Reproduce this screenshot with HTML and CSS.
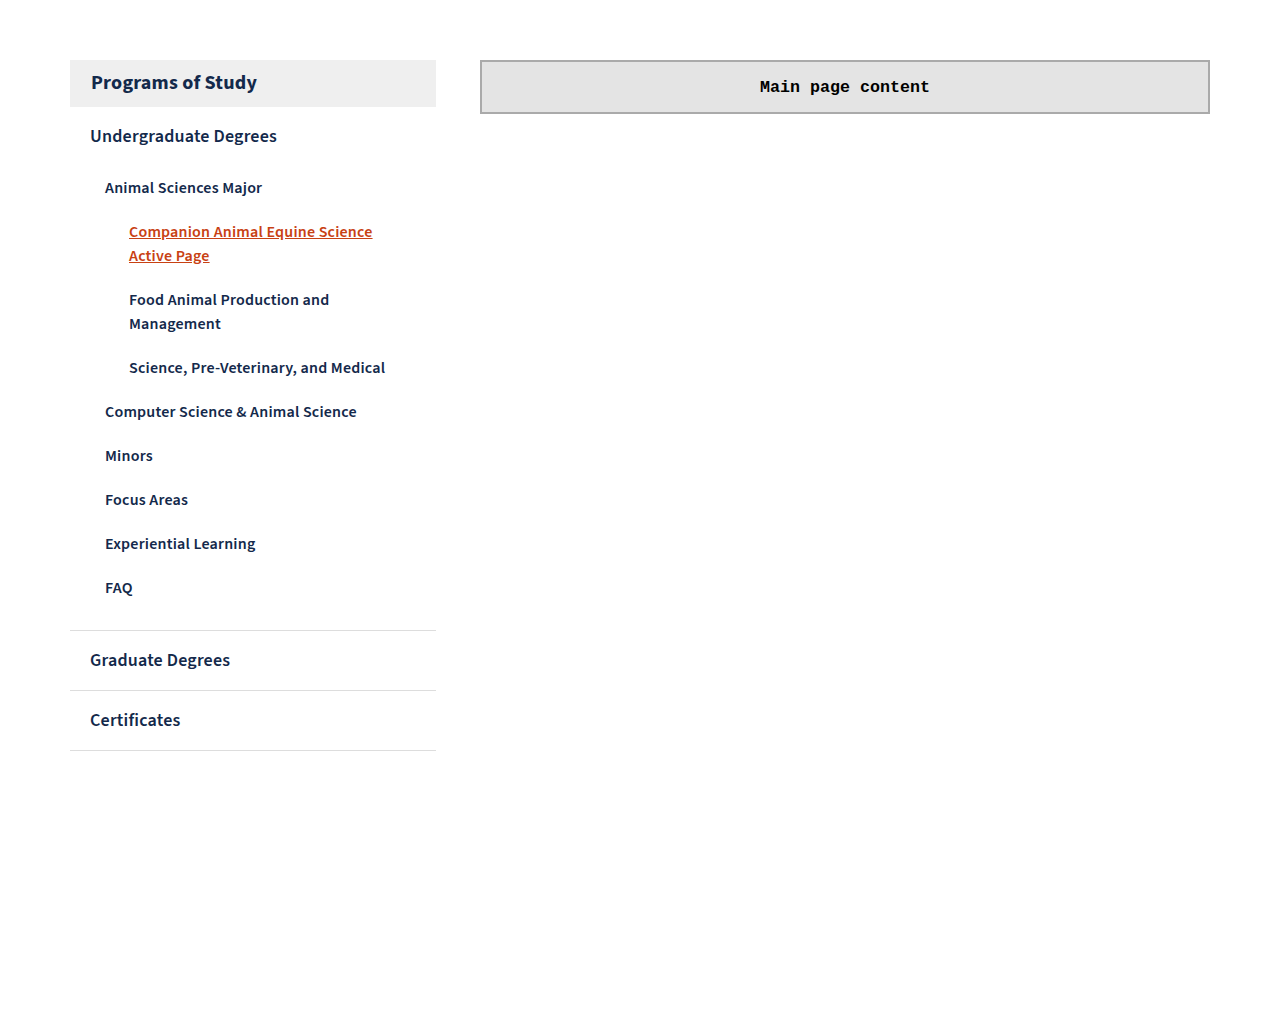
FILE: index.html
```html
<!DOCTYPE html>
<html lang="en">
<head>
<meta charset="utf-8">
<title>Programs of Study</title>
<link rel="stylesheet" href="styles.css">
</head>
<body>
<div class="page">
  <nav class="sidenav">
    <h2 class="sidenav-title">Programs of Study</h2>
    <ul class="level1">
      <li class="level1-item">
        <a class="level1-link first" href="#">Undergraduate Degrees</a>
        <ul class="level2">
          <li>
            <a class="level2-link" href="#">Animal Sciences Major</a>
            <ul class="level3">
              <li><a class="level3-link active" href="#">Companion Animal Equine Science <span>Active Page</span></a></li>
              <li><a class="level3-link" href="#">Food Animal Production and Management</a></li>
              <li><a class="level3-link" href="#">Science, Pre-Veterinary, and Medical</a></li>
            </ul>
          </li>
          <li><a class="level2-link" href="#">Computer Science &amp; Animal Science</a></li>
          <li><a class="level2-link" href="#">Minors</a></li>
          <li><a class="level2-link" href="#">Focus Areas</a></li>
          <li><a class="level2-link" href="#">Experiential Learning</a></li>
          <li><a class="level2-link" href="#">FAQ</a></li>
        </ul>
      </li>
      <li class="level1-item"><a class="level1-link" href="#">Graduate Degrees</a></li>
      <li class="level1-item"><a class="level1-link" href="#">Certificates</a></li>
    </ul>
  </nav>
  <main class="main">
    <div class="placeholder">Main page content</div>
  </main>
</div>
</body>
</html>
```

FILE: styles.css
```css
html, body {
  margin: 0;
  padding: 0;
  background: #ffffff;
}
body {
  font-family: "Source Sans Pro", "Source Sans 3", Lato, "Noto Sans", sans-serif;
  color: #13294b;
  letter-spacing: 0.2px;
}
.page {
  width: 1140px;
  margin: 60px auto 0;
  display: grid;
  grid-template-columns: 366px 1fr;
  column-gap: 44px;
  align-items: start;
}
.sidenav-title {
  margin: 0;
  background: #efefef;
  font-size: 20px;
  font-weight: 700;
  line-height: 27px;
  padding: 10px 21px;
  color: #13294b;
}
ul {
  list-style: none;
  margin: 0;
  padding: 0;
}
a {
  color: #13294b;
  text-decoration: none;
}
.level1-item {
  border-bottom: 1px solid #dddddd;
}
.level1-link {
  display: block;
  font-size: 18px;
  font-weight: 600;
  line-height: 24px;
  padding: 18px 20px 17px;
}
.level1-link.first {
  padding-bottom: 17px;
}
.level2 {
  padding-bottom: 20px;
}
.level2-link {
  display: block;
  font-size: 16px;
  font-weight: 600;
  line-height: 24px;
  padding: 10px 20px 10px 35px;
}
.level3-link {
  display: block;
  font-size: 16px;
  font-weight: 600;
  line-height: 24px;
  padding: 10px 40px 10px 59px;
}
.level3-link.active {
  color: #c84113;
  text-decoration: underline;
}
.level3-link.active span {
  display: block;
}
.placeholder {
  background: #e4e4e4;
  border: 2px solid #aaaaaa;
  height: 50px;
  display: flex;
  align-items: center;
  justify-content: center;
  font-family: "Liberation Mono", "DejaVu Sans Mono", monospace;
  font-weight: 700;
  font-size: 16.67px;
  letter-spacing: 0;
  color: #000000;
}
```
